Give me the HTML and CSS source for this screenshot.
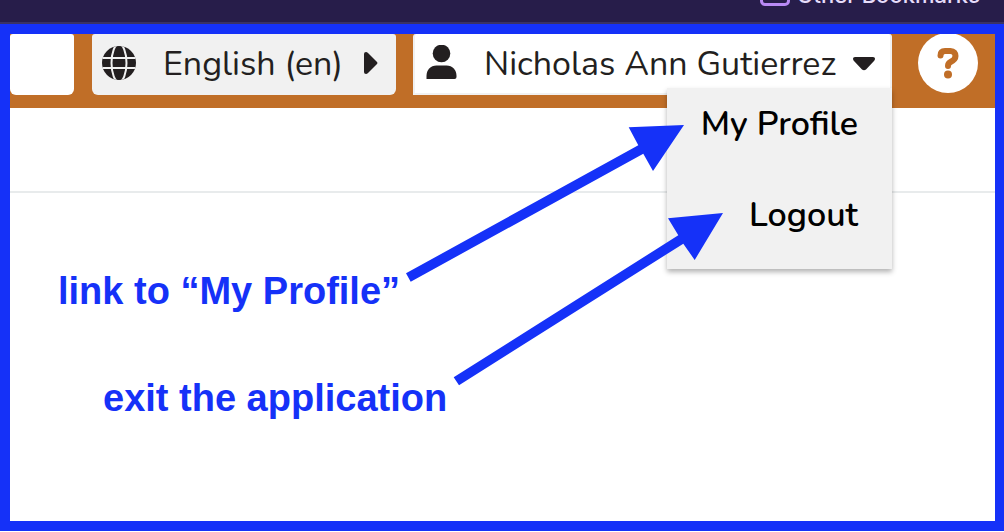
FILE: index.html
```html
<!DOCTYPE html>
<html lang="en">
<head>
<meta charset="utf-8">
<title>User menu</title>
<link rel="stylesheet" href="styles.css">
</head>
<body>
<div class="bookmarks">
  <a class="bookmark" href="#"><span class="folder"></span>Other Bookmarks</a>
</div>
<main class="frame">
  <header class="topbar">
    <div class="pill blank"></div>
    <button class="pill language" type="button">
      <svg class="globe" viewBox="0 0 34 34" aria-hidden="true">
        <defs><clipPath id="disc"><circle cx="17" cy="17" r="17"/></clipPath></defs>
        <g clip-path="url(#disc)">
          <rect width="34" height="34" fill="#231f20"/>
          <g fill="none" stroke="#f1f1f1" stroke-width="2">
            <ellipse cx="17" cy="17" rx="7.500" ry="19"/>
            <path d="M0 12H34M0 22H34"/>
          </g>
        </g>
      </svg>
      <span class="language-name">English (en)</span>
      <svg class="caret-right" viewBox="0 0 14 22" aria-hidden="true"><path d="M0 2Q0 0 2 0Q3 0 4 1L13 10Q14 11 13 12L4 21Q3 22 2 22Q0 22 0 20Z" fill="#231f20"/></svg>
    </button>
    <div class="account">
      <button class="pill user" type="button">
        <svg class="person" viewBox="0 0 30 34" aria-hidden="true"><circle cx="15" cy="8.500" r="8.800" fill="#231f20"/><path d="M0 34V31C0 25 4 20.500 10 20.500H20C26 20.500 30 25 30 31V32Q30 34 28 34Z" fill="#231f20"/></svg>
        <span class="user-name">Nicholas Ann Gutierrez</span>
        <svg class="caret-down" viewBox="0 0 22 14" aria-hidden="true"><path d="M2 0H20Q22 0 22 1.500Q22 3 21 4L13 12.500Q11 14 9 12.500L1 4Q0 3 0 1.500Q0 0 2 0Z" fill="#231f20"/></svg>
      </button>
      <nav class="menu">
        <a href="#">My Profile</a>
        <a href="#">Logout</a>
      </nav>
    </div>
    <button class="help" type="button" aria-label="Help">
      <svg viewBox="0 0 60 60" aria-hidden="true"><path d="M22.500 22.500C22.500 19.500 24 18 27 18H32.500C36 18 37.500 20.500 37.500 23C37.500 26 35.500 27.500 32.500 29C30.500 30 30 31 30 33" fill="none" stroke="#c06e27" stroke-width="6" stroke-linecap="round" stroke-linejoin="round"/><circle cx="30" cy="41.500" r="4" fill="#c06e27"/></svg>
    </button>
  </header>
  <div class="subbar"></div>
  <section class="notes">
    <p class="note">link to “My Profile”</p>
    <p class="note note-exit">exit the application</p>
  </section>
  <svg class="arrows" viewBox="0 24 1004 508" aria-hidden="true">
    <path d="M406 273.300L638.300 145.300L628.700 127.300L684 125L653 171L643.300 153.700L410.700 281.700Z"/>
    <path d="M453.700 377.300L678.300 235.300L668 218.300L723 213L694.700 260L683.300 243.700L459 385.300Z"/>
  </svg>
</main>
</body>
</html>
```
FILE: styles.css
```css
* {
  box-sizing: border-box;
}

body {
  margin: 0;
  min-height: 100vh;
  display: flex;
  flex-direction: column;
  background: #fff;
  color: #231f20;
  font-family: "Nunito", "Lato", sans-serif;
  font-size: 34px;
}

button {
  border: 0;
  padding: 0;
  color: inherit;
  font: inherit;
  cursor: pointer;
}

a {
  color: inherit;
  text-decoration: none;
}

p {
  margin: 0;
}

.bookmarks {
  display: flex;
  justify-content: flex-end;
  align-items: flex-start;
  height: 24px;
  padding-right: 24px;
  overflow: hidden;
  background: #271d4a;
  border-bottom: 2px solid #3a3265;
}

.bookmark {
  display: flex;
  align-items: flex-end;
  gap: 7px;
  height: 24px;
  margin-top: -16px;
  color: #e6dcfa;
  font: 500 22px/26px "Inter", sans-serif;
}

.folder {
  width: 30px;
  height: 22px;
  margin-bottom: 2px;
  border: 3px solid #b98af5;
  border-radius: 5px;
}

.frame {
  position: relative;
  flex: 1;
  margin-bottom: 1px;
  border: 10px solid #1531f8;
  border-right-width: 9px;
}

.topbar {
  display: flex;
  align-items: flex-start;
  height: 74px;
  padding-right: 17px;
  background: #c06e27;
}

.pill {
  display: flex;
  align-items: center;
  height: 61px;
  border-radius: 3px 3px 6px 6px;
  line-height: 60px;
  white-space: nowrap;
}

.blank {
  flex: 1;
  margin-right: 18px;
  background: #fff;
}

.language {
  width: 304px;
  padding: 0 18px 4px 10px;
  background: #f1f1f1;
}

.globe {
  width: 34px;
  height: 34px;
}

.language-name {
  flex: 1;
  padding: 2px 0 0 27px;
  text-align: left;
}

.caret-right {
  width: 14px;
  height: 22px;
}

.account {
  position: relative;
  margin: 0 26px 0 17px;
}

.user {
  width: 479px;
  padding: 0 15px 0 11px;
  border: solid #f1f1f1;
  border-width: 0 2px 2px;
  border-radius: 3px 3px 0 0;
  background: #fff;
}

.person {
  width: 31px;
  height: 34px;
  margin-bottom: 4px;
}

.user-name {
  flex: 1;
  padding-left: 27px;
  text-align: left;
}

.caret-down {
  width: 22px;
  height: 14px;
}

.menu {
  position: absolute;
  top: 54px;
  right: 0;
  display: flex;
  flex-direction: column;
  width: 225px;
  padding-bottom: 19px;
  background: #f1f1f1;
  box-shadow: 0 3px 5px rgba(0, 0, 0, 0.3);
  color: #000;
  font-weight: 600;
}

.menu a {
  padding: 0 34px 19px 0;
  line-height: 72px;
  height: 91px;
  text-align: right;
}

.menu a:last-child {
  height: 71px;
}

.help {
  width: 60px;
  height: 60px;
  margin-top: -1px;
  border-radius: 50%;
  background: #fff;
  clip-path: inset(1px 0 0);
}

.help svg {
  display: block;
}

.subbar {
  height: 85px;
  border-bottom: 2px solid #e8ebec;
}

.notes {
  display: flex;
  flex-direction: column;
  gap: 63px;
  padding: 76px 48px;
  color: #1531f8;
  font: bold 38px/44px "Liberation Sans", Arial, sans-serif;
}

.note-exit {
  padding-left: 45px;
}

.arrows {
  position: absolute;
  top: -10px;
  left: -10px;
  width: 1004px;
  height: 508px;
  fill: #1531f8;
  pointer-events: none;
}
```
